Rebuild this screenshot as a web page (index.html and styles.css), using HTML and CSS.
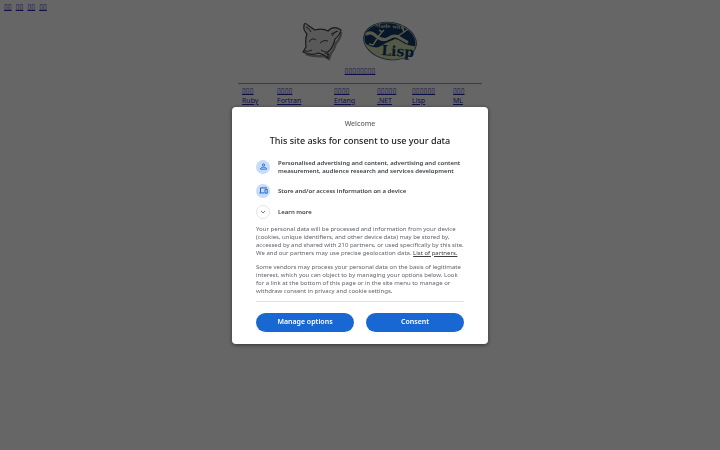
FILE: index.html
```html
<!DOCTYPE html>
<html lang="en">
<head>
<meta charset="utf-8">
<title>Programming languages</title>
<link rel="stylesheet" href="styles.css">
</head>
<body>
<nav class="langs"><a href="#">▯▯</a><a href="#">▯▯</a><a href="#">▯▯</a><a href="#">▯▯</a></nav>
<main class="page">
  <div class="logos">
    <svg class="fox" viewBox="0 0 44 44" aria-hidden="true">
      <path d="M41 13Q41 19 36 24Q34 31 31 34L29 40 24 37Q14 38 6 35" fill="none" stroke="#555" stroke-width="2.5" opacity=".6"/>
      <path d="M4 7Q4 2 9 7L15 11Q23 9 28 12Q33 6 41 11Q40 16 35 20Q33 29 28 33L28 39 24 36 18 34Q11 37 3 33L6 28Q5 20 7 15Q3 11 4 7Z" fill="#dedede" stroke="#444" stroke-width="1.2"/>
      <path d="M6 8Q9 9 11 13M37 12Q34 13 32 17M9 23Q12 18 16 21M20 24Q24 20 28 22M4 32Q9 33 12 31M21 31Q25 34 28 33M31 15L38 12M29 36L25 34" fill="none" stroke="#444" stroke-width="1"/>
    </svg>
    <svg class="lisp" viewBox="0 0 56 42" aria-hidden="true">
      <defs><clipPath id="oval"><ellipse cx="28" cy="21" rx="26" ry="18" transform="rotate(10 28 21)"/></clipPath></defs>
      <ellipse cx="28" cy="21" rx="27" ry="19" transform="rotate(10 28 21)" fill="#123a66"/>
      <g clip-path="url(#oval)">
        <path d="M0 21Q10 29 17 27Q25 22 33 19Q40 20 46 25L56 27V42H0Z" fill="#d3dbb0"/>
      </g>
      <ellipse cx="28" cy="21" rx="26" ry="18" transform="rotate(10 28 21)" fill="none" stroke="#d3dbb0" stroke-width=".7"/>
      <path d="M5 14Q9 11 14 16Q21 22 27 18Q33 14 38 18L45 22" fill="none" stroke="#123a66" stroke-width="5"/>
      <path d="M5 14Q9 11 14 16Q21 22 27 18Q33 14 38 18L45 22" fill="none" stroke="#d8dfbf" stroke-width="3" stroke-linecap="round"/>
      <path d="M16 17L20 12 17 10M20 12L22 10M15 19L11 25 7 24M36 16L42 12 40 7M42 12L46 9" fill="none" stroke="#d8dfbf" stroke-width="1.5"/>
      <text class="made" x="13" y="7" transform="rotate(4 13 7)">Made with</text>
      <text class="lisp-word" x="19" y="35" transform="rotate(4 19 35)">Lisp</text>
    </svg>
  </div>
  <a class="title" href="#">▯▯▯▯▯▯▯▯</a>
  <nav class="grid">
    <div><a href="#">▯▯▯</a><a href="#">Ruby</a></div>
    <div><a href="#">▯▯▯▯</a><a href="#">Fortran</a></div>
    <div><a href="#">▯▯▯▯</a><a href="#">Erlang</a></div>
    <div><a href="#">▯▯▯▯▯</a><a href="#">.NET</a></div>
    <div><a href="#">▯▯▯▯▯▯</a><a href="#">Lisp</a></div>
    <div><a href="#">▯▯▯</a><a href="#">ML</a></div>
  </nav>
</main>
<div class="overlay">
  <section class="dialog" role="dialog" aria-modal="true" aria-labelledby="heading">
    <p class="welcome">Welcome</p>
    <h1 id="heading">This site asks for consent to use your data</h1>
    <ul class="purposes">
      <li>
        <span class="icon"><svg viewBox="0 0 24 24" aria-hidden="true"><path d="M12 5a3 3 0 1 1 0 6 3 3 0 0 1 0-6zM4 19v-1c0-3 5-4 8-4s8 1 8 4v1z" fill="none" stroke="#1967d2" stroke-width="2.4"/></svg></span>
        <span>Personalised advertising and content, advertising and content measurement, audience research and services development</span>
      </li>
      <li>
        <span class="icon"><svg viewBox="0 0 24 24" aria-hidden="true"><path d="M21 5H4v13M1 18.500h13M16 9h6v10h-6z" fill="none" stroke="#1967d2" stroke-width="2.600"/></svg></span>
        <span>Store and/or access information on a device</span>
      </li>
    </ul>
    <button class="more" type="button">
      <span class="icon plain"><svg viewBox="0 0 24 24" aria-hidden="true"><path d="M4 8l8 8 8-8" fill="none" stroke="#5f6368" stroke-width="3.500"/></svg></span>
      <span>Learn more</span>
    </button>
    <p class="body">Your personal data will be processed and information from your device (cookies, unique identifiers, and other device data) may be stored by, accessed by and shared with 210 partners, or used specifically by this site. We and our partners may use precise geolocation data. <a href="#">List of partners.</a></p>
    <p class="body">Some vendors may process your personal data on the basis of legitimate interest, which you can object to by managing your options below. Look for a link at the bottom of this page or in the site menu to manage or withdraw consent in privacy and cookie settings.</p>
    <div class="actions">
      <button type="button">Manage options</button>
      <button type="button">Consent</button>
    </div>
  </section>
</div>
</body>
</html>
```
FILE: styles.css
```css
* { box-sizing: border-box; }
body {
  margin: 0;
  background: #fff;
  color: #3c4043;
  font-family: "Noto Sans", "DejaVu Sans", sans-serif;
  font-size: 6px;
  line-height: 8px;
}
p, h1, ul { margin: 0; padding: 0; }
.langs { display: flex; gap: 4px; padding: 3px 4px 0; }
.langs a, .title, .grid a { color: #1c2cb4; font-size: 7px; }
.page {
  max-width: 244px;
  margin: 8px auto 0;
  text-align: center;
}
.logos { display: flex; justify-content: center; gap: 18px; padding-right: 2px; }
.fox { width: 44px; height: 44px; }
.lisp { width: 56px; height: 44px; }
.made { font: bold 5px "DejaVu Serif", serif; fill: #d3dbb0; }
.lisp-word { font: bold 14px "DejaVu Serif", serif; fill: #123a66; }
.title { display: block; margin-top: 4px; }
.grid {
  display: grid;
  grid-template-columns: 35fr 57fr 43fr 35fr 41fr 29fr;
  margin-top: 8px;
  padding: 2px 0 0 4px;
  border-top: 1px solid #999;
  text-align: left;
}
.grid a { display: block; line-height: 10px; }
.overlay {
  position: fixed;
  inset: 0;
  display: flex;
  align-items: center;
  justify-content: center;
  background: rgba(0, 0, 0, 0.6);
}
.dialog {
  width: 256px;
  padding: 12px 24px;
  border-radius: 4px;
  background: #fff;
  box-shadow: 0 1px 4px rgba(0, 0, 0, 0.5);
}
.welcome { font-size: 7px; line-height: 10px; text-align: center; color: #5f6368; font-weight: 500; }
h1 {
  margin-top: 6px;
  font-size: 9px;
  line-height: 12px;
  font-weight: 500;
  text-align: center;
  color: #202124;
}
.purposes { list-style: none; margin-top: 12px; }
.purposes li, .more { display: flex; align-items: center; gap: 8px; font-weight: 600; }
.purposes li { min-height: 16px; margin-bottom: 8px; }
.purposes li:last-child { margin-bottom: 6px; }
.icon {
  display: flex;
  flex: none;
  align-items: center;
  justify-content: center;
  width: 14px;
  height: 14px;
  border-radius: 50%;
  background: #c6dcf8;
}
.icon svg { width: 9px; height: 9px; }
.plain { border: 1px solid #e3e5e8; background: #fff; }
.plain svg { width: 6px; height: 6px; }
button { margin: 0; padding: 0; border: 0; font: inherit; cursor: pointer; }
.more { background: none; color: inherit; }
.body { margin-top: 6px; color: #5f6368; }
.body a { color: #3c4043; }
.actions {
  display: flex;
  gap: 12px;
  margin-top: 6px;
  padding-top: 11px;
  border-top: 1px solid #e0e2e5;
}
.actions button {
  flex: 1;
  height: 19px;
  border-radius: 10px;
  background: #1967d2;
  color: #fff;
  font-size: 7px;
  font-weight: 600;
}
```
